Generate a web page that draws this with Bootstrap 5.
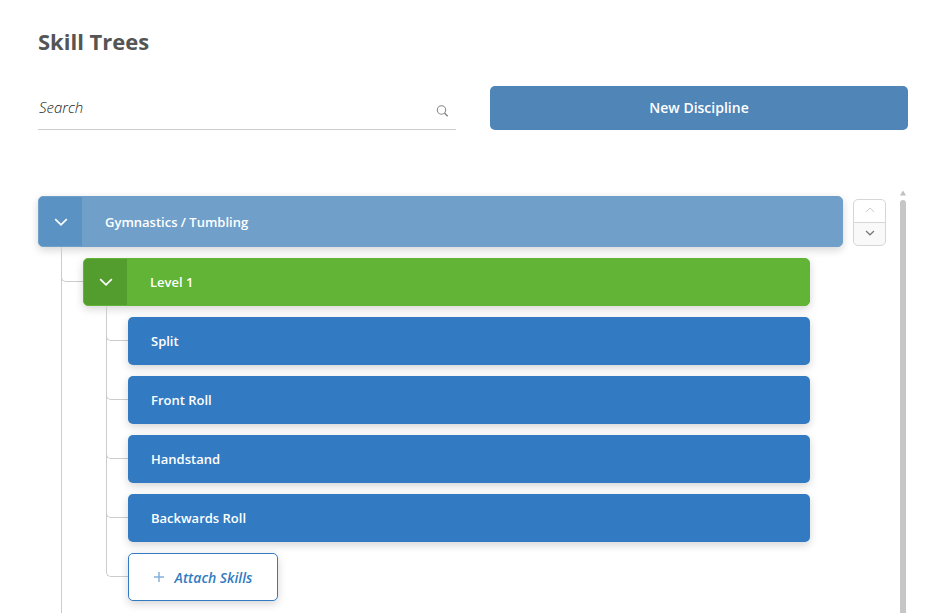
<!DOCTYPE html>
<html lang="en">
<head>
  <meta charset="UTF-8" />
  <meta name="viewport" content="width=device-width, initial-scale=1" />
  <title>Skill Trees</title>
  <link href="https://cdn.jsdelivr.net/npm/bootstrap@5.3.3/dist/css/bootstrap.min.css" rel="stylesheet" />
  <style>
    body {
      font-family: "Open Sans", sans-serif;
      font-size: 13px;
      color: #555;
      background: #fff;
    }
    .page {
      height: 100vh;
      padding: 25px 22px 0 38px;
    }
    .page-title {
      font-size: 22px;
      line-height: 32px;
      margin-bottom: 29px;
    }

    /* Search + new discipline */
    .toolbar {
      gap: 34px;
      margin-bottom: 66px;
    }
    .search-box {
      flex: 1 1 0;
      height: 44px;
      border-bottom: 1px solid #ccc;
    }
    .search-box input,
    .search-box input:focus {
      border: 0;
      border-radius: 0;
      padding: 0 0 1px 1px;
      box-shadow: none;
      background: transparent;
      color: #333;
      font-size: 15px;
      font-style: italic;
      font-weight: 300;
    }
    .search-box input::placeholder {
      color: #222;
      opacity: 1;
    }
    .search-box button {
      width: 28px;
      padding: 6px 8px 0;
      line-height: 1;
    }
    .btn-discipline,
    .btn-discipline:hover {
      flex: 1 1 0;
      height: 44px;
      padding: 0 0 2px;
      border-radius: 5px;
      background: #4f85b7;
      color: #fff;
      font-size: 14px;
      font-weight: 600;
    }

    /* Tree bars */
    .tree-area {
      padding-right: 2px;
    }
    .node {
      height: 48px;
      border-radius: 5px;
      box-shadow: 0 3px 8px rgba(0, 0, 0, 0.17);
      color: #fff;
      font-weight: 600;
      overflow: hidden;
    }
    .node-label {
      padding: 2px 0 0 23px;
    }
    .node-toggle {
      width: 43px;
      border: 0;
      padding: 0;
      color: #fff;
    }
    .node-discipline {
      height: 51px;
      background: #70a0ca;
      border: 1px solid #70a0ca;
    }
    .node-discipline .node-toggle { background: #5b92c4; }
    .node-level {
      background: #61b436;
      border: 1px solid #61b436;
    }
    .node-level .node-toggle { background: #539d2e; }
    .node-skill { background: #327bc2; }
    .node-attach,
    .node-attach:hover {
      width: 150px;
      gap: 11px;
      background: #fff;
      border: 1px solid #327bc2;
      color: #327bc2;
      font-size: 14px;
      font-style: italic;
      font-weight: 600;
    }

    /* Lines between bars: the connector is the trunk, the elbow turns into the bar */
    .branch {
      padding-left: 23px;
    }
    .branch-levels {
      padding-right: 33px;
    }
    .connector {
      width: 22px;
      flex: none;
      border-left: 1px solid #ccc;
    }
    .elbow {
      height: 35px;
      margin-left: -1px;
      border: solid #ccc;
      border-width: 0 0 1px 1px;
      border-bottom-left-radius: 5px;
    }
    .connector-last {
      border-left-color: transparent;
    }
    .node-wrap {
      padding-top: 11px;
    }

    /* Move up / down */
    .stepper {
      width: 33px;
      margin: 3px 0 0 10px;
    }
    .stepper button {
      height: 24px;
      padding: 0 0 2px;
      border: 1px solid #d6d6d6;
      background: #f9f9f9;
      color: #777;
      line-height: 1;
    }
    .stepper button:first-child { border-radius: 5px 5px 0 0; }
    .stepper button:last-child {
      border-radius: 0 0 5px 5px;
      margin-top: -1px;
    }
    .stepper button:disabled {
      background: #fff;
      color: #ccc;
    }

    /* Scroll track */
    .scroll-track {
      width: 6px;
      margin: -6px 0 0 14px;
    }
    .scroll-thumb {
      margin-top: 4px;
      background: #c6c6c6;
      border-radius: 3px 3px 0 0;
    }
  </style>
</head>
<body>

  <main class="page d-flex flex-column overflow-hidden">
    <h1 class="page-title fw-bold">Skill Trees</h1>

    <div class="toolbar d-flex flex-shrink-0">
      <form class="search-box d-flex" role="search">
        <input type="search" class="form-control" placeholder="Search" aria-label="Search" />
        <button type="button" class="btn border-0" aria-label="Search">
          <svg class="d-block" width="12" height="12" viewBox="0 0 12 12" fill="none" stroke="#888" stroke-width="1.1">
            <circle cx="5.5" cy="5" r="4.2" />
            <path d="M8.5 8l3.2 3.2" stroke-width="1.5" />
          </svg>
        </button>
      </form>
      <button type="button" class="btn btn-discipline border-0">New Discipline</button>
    </div>

    <div class="tree-area d-flex flex-grow-1">
      <div class="d-flex flex-column flex-grow-1">
        <div class="node node-discipline d-flex align-items-center flex-shrink-0">
          <button type="button" class="node-toggle h-100" aria-label="Collapse Gymnastics / Tumbling">
            <svg class="d-block mx-auto" width="14" height="14" viewBox="0 0 14 14" fill="none" stroke="currentColor" stroke-width="1.7"><path d="M1.2 4.2L7 9.8l5.8-5.6" /></svg>
          </button>
          <span class="node-label">Gymnastics / Tumbling</span>
        </div>

        <ul class="branch branch-levels list-unstyled d-flex flex-column flex-grow-1 mb-0">
          <li class="d-flex flex-grow-1">
            <div class="connector"><div class="elbow"></div></div>
            <div class="flex-grow-1">
              <div class="node-wrap">
                <div class="node node-level d-flex align-items-center">
                  <button type="button" class="node-toggle h-100" aria-label="Collapse Level 1">
                    <svg class="d-block mx-auto" width="14" height="14" viewBox="0 0 14 14" fill="none" stroke="currentColor" stroke-width="1.7"><path d="M1.2 4.2L7 9.8l5.8-5.6" /></svg>
                  </button>
                  <span class="node-label">Level 1</span>
                </div>
              </div>

              <ul class="branch list-unstyled mb-0">
                <li class="d-flex">
                  <div class="connector"><div class="elbow"></div></div>
                  <div class="node-wrap flex-grow-1"><div class="node node-skill d-flex align-items-center"><span class="node-label">Split</span></div></div>
                </li>
                <li class="d-flex">
                  <div class="connector"><div class="elbow"></div></div>
                  <div class="node-wrap flex-grow-1"><div class="node node-skill d-flex align-items-center"><span class="node-label">Front Roll</span></div></div>
                </li>
                <li class="d-flex">
                  <div class="connector"><div class="elbow"></div></div>
                  <div class="node-wrap flex-grow-1"><div class="node node-skill d-flex align-items-center"><span class="node-label">Handstand</span></div></div>
                </li>
                <li class="d-flex">
                  <div class="connector"><div class="elbow"></div></div>
                  <div class="node-wrap flex-grow-1"><div class="node node-skill d-flex align-items-center"><span class="node-label">Backwards Roll</span></div></div>
                </li>
                <li class="d-flex">
                  <div class="connector connector-last"><div class="elbow"></div></div>
                  <div class="node-wrap">
                    <button type="button" class="node node-attach d-flex align-items-center justify-content-center">
                      <svg width="10" height="10" viewBox="0 0 10 10" stroke="#84b0dc" stroke-width="1.5"><path d="M5 0v10M0 5h10" /></svg>
                      Attach Skills
                    </button>
                  </div>
                </li>
              </ul>
            </div>
          </li>
        </ul>
      </div>

      <div class="stepper d-flex flex-column flex-shrink-0">
        <button type="button" aria-label="Move up" disabled>
          <svg class="d-block mx-auto" width="10" height="10" viewBox="0 0 10 10" fill="none" stroke="currentColor"><path d="M1 6.8l4-3.8 4 3.8" /></svg>
        </button>
        <button type="button" aria-label="Move down">
          <svg class="d-block mx-auto" width="10" height="10" viewBox="0 0 10 10" fill="none" stroke="currentColor" stroke-width="1.2"><path d="M1 3l4 3.8L9 3" /></svg>
        </button>
      </div>

      <div class="scroll-track d-flex flex-column flex-shrink-0" aria-hidden="true">
        <svg class="flex-shrink-0" width="6" height="6" viewBox="0 0 6 6" fill="#c0c0c0"><path d="M3 .5L6 5.5H0z" /></svg>
        <div class="scroll-thumb flex-grow-1"></div>
      </div>
    </div>
  </main>

  <script src="https://cdn.jsdelivr.net/npm/bootstrap@5.3.3/dist/js/bootstrap.bundle.min.js"></script>
</body>
</html>
